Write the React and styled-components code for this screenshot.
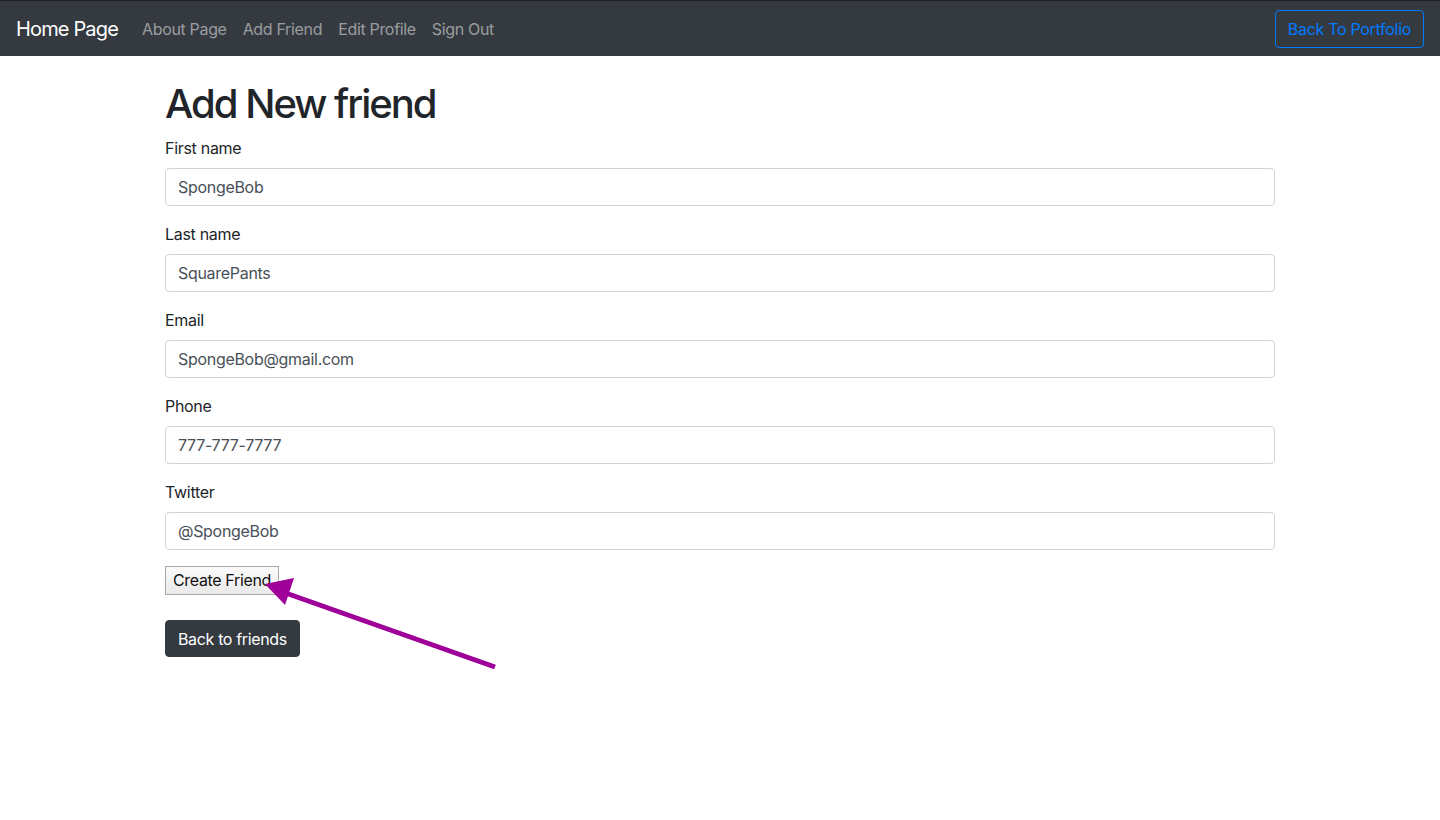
import React from "react";
import styled, { createGlobalStyle } from "styled-components";

const GlobalStyle = createGlobalStyle`
  body {
    margin: 0;
    font-family: Inter, "Noto Sans", "Liberation Sans", sans-serif;
    font-size: 16px;
    line-height: 1.5;
    color: #212529;
    background: #fff;
  }
  * { box-sizing: border-box; }
`;

const Page = styled.div`
  position: relative;
  min-height: 820px;
`;

const Navbar = styled.nav`
  display: flex;
  align-items: center;
  justify-content: space-between;
  height: 56px;
  padding: 8px 16px;
  background: #343a40;
  border-top: 1px solid #1d2024;
`;

const NavLeft = styled.div`
  display: flex;
  align-items: center;
`;

const Brand = styled.a`
  color: #fff;
  font-size: 20px;
  line-height: 30px;
  margin-right: 16px;
  letter-spacing: -0.85px;
  text-decoration: none;
`;

const NavLink = styled.a`
  color: rgba(255, 255, 255, 0.5);
  padding: 8px;
  text-decoration: none;
  letter-spacing: -0.33px;
`;

const OutlineButton = styled.button`
  font: inherit;
  color: #007bff;
  background: transparent;
  border: 1px solid #007bff;
  border-radius: 4px;
  padding: 6px 12px;
  line-height: 24px;
  letter-spacing: -0.3px;
`;

const Container = styled.main`
  width: 1140px;
  margin: 24px auto 0;
  padding: 0 15px;
`;

const Title = styled.h1`
  font-size: 40px;
  font-weight: 500;
  line-height: 48px;
  margin: 0 0 8px;
  letter-spacing: -2px;
`;

const Group = styled.div`
  margin-bottom: 16px;
`;

const Label = styled.label`
  display: block;
  margin-bottom: 8px;
  letter-spacing: -0.3px;
`;

const Input = styled.input`
  display: block;
  width: 100%;
  height: 38px;
  padding: 6px 12px;
  font: inherit;
  color: #495057;
  border: 1px solid #ced4da;
  border-radius: 4px;
  letter-spacing: -0.3px;
`;

const SubmitButton = styled.button`
  font: inherit;
  font-size: 16px;
  line-height: 19px;
  color: #111;
  padding: 4px 7px 4px;
  border: 1px solid #a9a9a9;
  border-radius: 0;
  background: linear-gradient(#fbfbfb, #e9e9e9);
  letter-spacing: -0.35px;
`;

const DarkButton = styled.button`
  display: block;
  margin-top: 25px;
  height: 37px;
  font: inherit;
  color: #fff;
  background: #343a40;
  border: 1px solid #343a40;
  border-radius: 4px;
  padding: 5px 12px;
  line-height: 24px;
  letter-spacing: -0.35px;
`;

const Arrow = styled.svg`
  position: absolute;
  left: 0;
  top: 0;
  pointer-events: none;
`;

const fields = [
  ["First name", "SpongeBob"],
  ["Last name", "SquarePants"],
  ["Email", "SpongeBob@gmail.com"],
  ["Phone", "777-777-7777"],
  ["Twitter", "@SpongeBob"],
];

export default function App() {
  return (
    <Page>
      <GlobalStyle />
      <Navbar>
        <NavLeft>
          <Brand href="#">Home Page</Brand>
          <NavLink href="#">About Page</NavLink>
          <NavLink href="#">Add Friend</NavLink>
          <NavLink href="#">Edit Profile</NavLink>
          <NavLink href="#">Sign Out</NavLink>
        </NavLeft>
        <OutlineButton>Back To Portfolio</OutlineButton>
      </Navbar>
      <Container>
        <Title>Add New friend</Title>
        <form>
          {fields.map(([label, value]) => (
            <Group key={label}>
              <Label>{label}</Label>
              <Input defaultValue={value} readOnly />
            </Group>
          ))}
          <SubmitButton type="button">Create Friend</SubmitButton>
        </form>
        <DarkButton>Back to friends</DarkButton>
      </Container>
      <Arrow width="1440" height="820" viewBox="0 0 1440 820">
        <line x1="495" y1="667" x2="280" y2="591" stroke="#a0009a" strokeWidth="5" />
        <polygon points="265,584 294,578 285,605" fill="#a0009a" />
      </Arrow>
    </Page>
  );
}
